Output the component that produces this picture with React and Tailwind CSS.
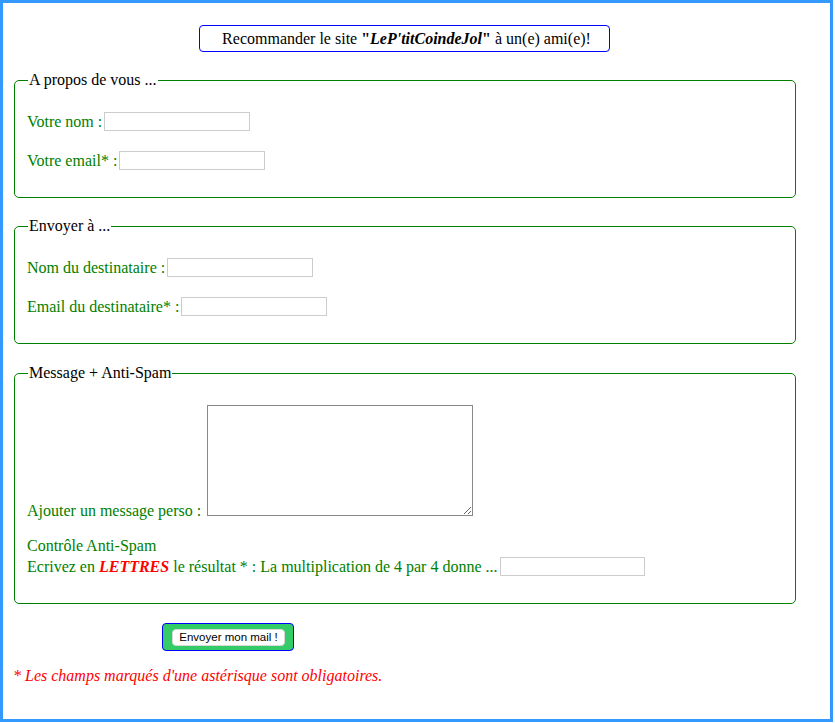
import { useState } from "react";

const serif = "font-['Liberation_Serif','Times_New_Roman',serif]";

const Field = ({ label, className = "" }) => (
  <div className={`flex items-center gap-[2px] h-[19px] ${className}`}>
    <label className="text-[#008000] text-[16px] leading-[18px] whitespace-nowrap">{label}</label>
    <input
      type="text"
      className="w-[146px] h-[19px] border border-[#cccccc] bg-white outline-none px-1 text-[13px]"
    />
  </div>
);

const Box = ({ legend, children, className = "" }) => (
  <fieldset
    className={`ml-[11px] w-[782px] border border-[#008000] rounded-[5px] pl-[12px] pr-3 pb-[27px] ${className}`}
  >
    <legend className="text-[16px] leading-[18px] text-black ml-[1px] px-[1px]">{legend}</legend>
    {children}
  </fieldset>
);

const App = () => {
  const [message, setMessage] = useState("");

  return (
    <div className={`${serif} bg-white`}>
      <div className="w-[833px] h-[722px] border-[3px] border-[#3399ff] box-border">
        {/* titre */}
        <div className="ml-[196px] mt-[22px] w-[411px] h-[27px] border border-[#0000ff] rounded-[4px] flex items-center justify-center text-[16px] leading-[18px] text-black pl-[4px]">
          <span>
            Recommander le site{" "}
            <b>
              "<i>LeP'titCoindeJol</i>"
            </b>{" "}
            à un(e) ami(e)!
          </span>
        </div>

        <Box legend="A propos de vous ..." className="mt-[19px]">
          <Field label="Votre nom :" className="mt-[23px]" />
          <Field label="Votre email* :" className="mt-[20px]" />
        </Box>

        <Box legend="Envoyer à ..." className="mt-[19px]">
          <Field label="Nom du destinataire :" className="mt-[23px]" />
          <Field label="Email du destinataire* :" className="mt-[20px]" />
        </Box>

        <Box legend="Message + Anti-Spam" className="mt-[20px]">
          <div className="flex items-end gap-[6px] mt-[23px]">
            <label className="text-[#008000] text-[16px] leading-[18px] whitespace-nowrap mb-[-4px]">
              Ajouter un message perso :
            </label>
            <textarea
              value={message}
              onChange={(e) => setMessage(e.target.value)}
              className="w-[266px] h-[111px] border border-[#888888] bg-white outline-none"
            />
          </div>
          <p className="text-[#008000] text-[16px] leading-[18px] mt-[21px]">Contrôle Anti-Spam</p>
          <div className="flex items-center gap-[2px] h-[19px] mt-[2px] text-[#008000] text-[16px] leading-[18px] whitespace-nowrap">
            <span>
              Ecrivez en <b className="italic text-[#ff0000]">LETTRES</b> le résultat * : La multiplication de 4 par 4 donne ...
            </span>
            <input
              type="text"
              className="w-[145px] h-[19px] border border-[#cccccc] bg-white outline-none"
            />
          </div>
        </Box>

        <div className="ml-[159px] mt-[19px] w-[132px] h-[28px] border border-[#0000ff] rounded-[4px] bg-[#33cc66] flex items-start pl-[9px] pt-[5px]">
          <button className="w-[113px] h-[17px] bg-white rounded-[4px] border border-[#d9d9d9] font-['Liberation_Sans',Arial,sans-serif] text-[11.5px] leading-[15px] text-black">
            Envoyer mon mail !
          </button>
        </div>

        <p className="ml-[10px] mt-[16px] text-[16px] leading-[18px] italic text-[#ff0000]">
          * Les champs marqués d'une astérisque sont obligatoires.
        </p>
      </div>
    </div>
  );
};

export default App;
